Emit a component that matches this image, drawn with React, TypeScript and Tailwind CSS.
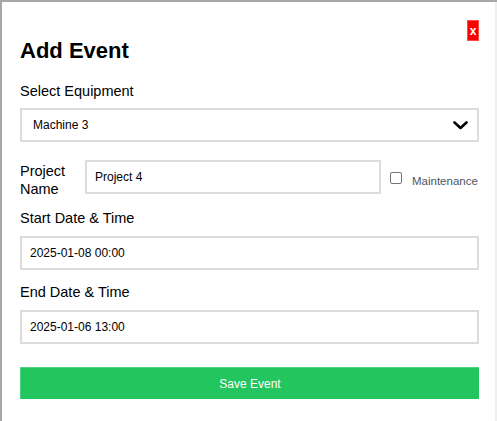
import React from "react";

const font = { fontFamily: '"Liberation Sans", Arial, sans-serif' };

export default function App() {
  return (
    <div className="w-[497px] h-[421px] overflow-hidden bg-[#a8a8a8] pt-[2px] pl-[2px]" style={font}>
      <div className="relative w-[495px] h-[430px] bg-white border-r-2 border-[#efefef] pl-[18px] pr-[16px] pt-[36px] text-black">
        <button className="absolute top-[18px] right-[16px] w-[12px] h-[21px] bg-[#ff0000] border border-[#ff4a4a] text-white text-[12px] font-bold leading-[18px] flex items-center justify-center p-0">
          x
        </button>
        <h2 className="text-[22px] font-bold leading-[26px]">Add Event</h2>

        <div className="mt-[19px] text-[14.5px] leading-[17px]">Select Equipment</div>
        <div className="mt-[8px] h-[34px] border-2 border-[#dcdcdc] flex items-center justify-between pl-[11px] pr-[9px]">
          <span className="text-[12px]">Machine 3</span>
          <svg width="15" height="9" viewBox="0 0 15 9" fill="none">
            <polyline points="1.5,1.5 7.5,7 13.5,1.5" stroke="#000" strokeWidth="2.6" strokeLinecap="round" strokeLinejoin="round" />
          </svg>
        </div>

        <div className="mt-[18px] flex items-start">
          <div className="w-[65px] shrink-0 pt-[3px] text-[14.5px] leading-[17.6px]">
            Project
            <br />
            Name
          </div>
          <input
            readOnly
            value="Project 4"
            className="w-[296px] h-[34px] border-2 border-[#dcdcdc] pl-[8px] text-[12px] text-black outline-none"
            style={font}
          />
          <span className="ml-[9px] mt-[12px] w-[12px] h-[12px] border border-[#767676] rounded-[2px] bg-white shrink-0" />
          <span className="ml-[10px] mt-[15px] text-[11.5px] leading-[13px] text-[#4b5563]">Maintenance</span>
        </div>

        <div className="mt-[12px] text-[14.5px] leading-[17px]">Start Date &amp; Time</div>
        <input
          readOnly
          value="2025-01-08 00:00"
          className="block mt-[9px] w-full h-[34px] border-2 border-[#dcdcdc] pl-[8px] text-[12px] text-black outline-none"
          style={font}
        />

        <div className="mt-[14px] text-[14.5px] leading-[17px]">End Date &amp; Time</div>
        <input
          readOnly
          value="2025-01-06 13:00"
          className="block mt-[9px] w-full h-[34px] border-2 border-[#dcdcdc] pl-[8px] text-[12px] text-black outline-none"
          style={font}
        />

        <button className="mt-[23px] w-full h-[32px] bg-[#22c55e] border-t border-l border-[#4fd280] text-white text-[12px] flex items-center justify-center">
          Save Event
        </button>
      </div>
    </div>
  );
}
